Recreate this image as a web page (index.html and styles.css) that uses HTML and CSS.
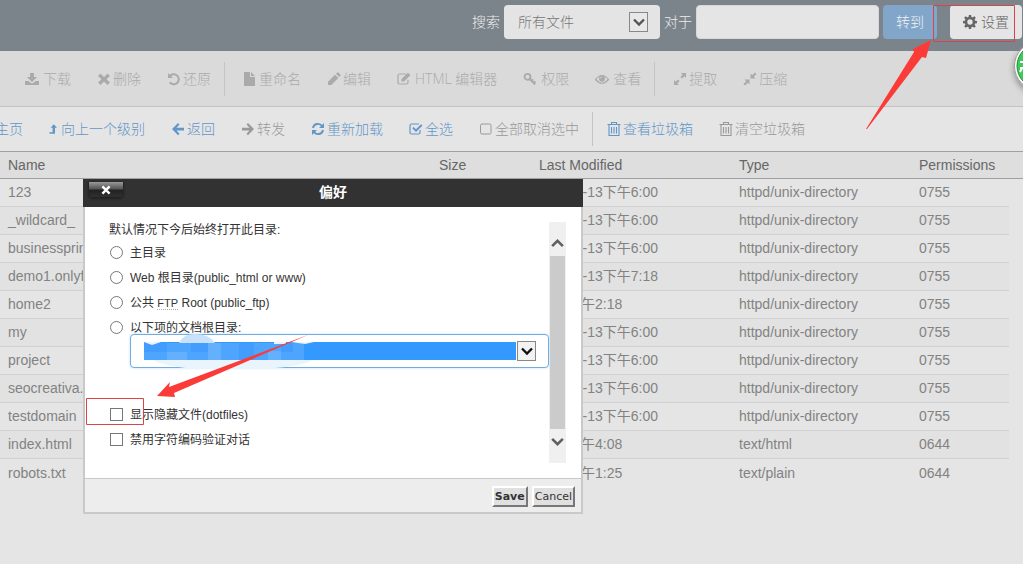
FILE: index.html
```html
<!DOCTYPE html>
<html lang="zh-CN">
<head>
<meta charset="utf-8">
<title>文件管理器</title>
<link rel="stylesheet" href="styles.css">
</head>
<body>
<svg class="symbols" aria-hidden="true">
  <symbol id="download" viewBox="0 0 14 14"><path d="M5 1h4v4h3L7 10 2 5h3zM0 9h3.500L6 11.300h2L10.500 9H14v4H0z"/></symbol>
  <symbol id="times" viewBox="0 0 14 14"><path d="M3.500 1.500 7 5l3.500-3.500L13 4 9.500 7.200 13 10.500 10.500 13 7 9.500 3.500 13 1 10.500 4.500 7.200 1 4z"/></symbol>
  <symbol id="undo" viewBox="0 0 14 14"><path d="M1 1v5h5L4.200 4.200A4 4 0 1 1 3.500 9.600L2 11A6 6 0 1 0 2.800 2.800z"/></symbol>
  <symbol id="file" viewBox="0 0 14 14"><path d="M1 0h6v5h5v9H1zM8 0l4 4H8z"/></symbol>
  <symbol id="pencil" viewBox="0 0 14 14"><path d="M1 13v-3.300L8 2.700 11.300 6l-7 7zM9 1.800l1.300-1.300h1L13.500 2.700v1L12.200 5z"/></symbol>
  <symbol id="edit" viewBox="0 0 14 14"><path d="M9 2H2.500Q1 2 1 3.500v7Q1 12 2.500 12h7Q11 12 11 10.500V8" fill="none" stroke="currentColor" stroke-width="1.200"/><path d="M4.500 9.500V7L11 .800 13.400 3.200 7 9.500z"/></symbol>
  <symbol id="key" viewBox="0 0 14 14"><g fill="none" stroke="currentColor" stroke-width="1.800"><circle cx="4.500" cy="4.800" r="3"/><path d="m6.700 7 5.500 5.500M8.500 9l1.600-1.600M10.700 11.200l1.800-1.800"/></g></symbol>
  <symbol id="eye" viewBox="0 0 14 14"><path d="M.5 7.500Q7-.5 13.500 7.500 7 15 .5 7.500z" fill="none" stroke="currentColor" stroke-width="1.200"/><circle cx="7" cy="6.800" r="3"/><path d="M5.300 6.500Q5.500 5 7 5" fill="none" stroke="#dadada" stroke-width=".8"/></symbol>
  <symbol id="expand" viewBox="0 0 14 14"><path d="M8 1h5v5l-1.700-1.700L9 6.600 7.400 5l2.300-2.300zM6 13H1V8l1.700 1.700L5 7.400 6.600 9l-2.300 2.300z"/></symbol>
  <symbol id="compress" viewBox="0 0 14 14"><path d="M7.500 6.500v-5l1.700 1.700L12 .500 13.500 2l-2.700 2.800 1.700 1.700zM6.500 7.500v5l-1.700-1.700L2 13.500.5 12l2.700-2.800-1.700-1.700z"/></symbol>
  <symbol id="home" viewBox="0 0 14 14"><path d="m7 1 7 6-1 1-6-5-6 5-1-1zM2 8l5-4 5 4v5H8V9H6v4H2z"/></symbol>
  <symbol id="up" viewBox="0 0 10 14"><path d="M6 1l4 4.500H7.500V13H1L0 11h4.500V5.500H2z"/></symbol>
  <symbol id="left" viewBox="0 0 14 14"><path d="M7 1l1.500 1.500L5.500 5.800H13v2.600H5.500l3 3.300L7 13.200 1 7z"/></symbol>
  <symbol id="right" viewBox="0 0 14 14"><path d="M7 1 5.500 2.500l3 3.300H1v2.600h7.500l-3 3.300L7 13.200 13 7z"/></symbol>
  <symbol id="refresh" viewBox="0 0 14 14"><path d="M2 6A5 5 0 0 1 11 4M12 8A5 5 0 0 1 3 10" fill="none" stroke="currentColor" stroke-width="1.900"/><path d="M13 1v5H8zM1 13V8h5z"/></symbol>
  <symbol id="checked" viewBox="0 0 14 14"><path d="M10 2H2.500Q1 2 1 3.500v7Q1 12 2.500 12h7Q11 12 11 10.500V8" fill="none" stroke="currentColor" stroke-width="1.200"/><path d="m3.200 6.300 1.300-1.300L7 7.300 12 2.200l1.500 1.400L7 10z"/></symbol>
  <symbol id="square" viewBox="0 0 14 14"><rect x="1.500" y="2" width="10.500" height="10" rx="1.500" fill="none" stroke="currentColor"/></symbol>
  <symbol id="trash" viewBox="0 0 14 14"><path d="M.5 2.500h13M4.500 2.500v-2h5v2M2 2.500v11h10v-11M4.500 5v6.500M7 5v6.500M9.500 5v6.500" fill="none" stroke="currentColor" stroke-width="1.100"/></symbol>
  <symbol id="gear" viewBox="0 0 14 14"><path fill-rule="evenodd" d="M5.900 0h2.200l.4 2 1.100.5L11.300 1.300l1.500 1.500-1.200 1.700.5 1.200 1.900.3v2.200l-1.900.3-.5 1.200 1.200 1.600-1.500 1.500-1.700-1.100-1.100.4L8.100 14H5.900l-.4-1.900-1.100-.4-1.700 1.100-1.500-1.500 1.200-1.600-.5-1.200L0 8.200V6l1.900-.3.5-1.200-1.200-1.700 1.500-1.500 1.700 1.200L5.500 2zM7 4.300a2.700 2.700 0 1 0 0 5.400 2.700 2.700 0 0 0 0-5.400z"/></symbol>
  <symbol id="chevron" viewBox="0 0 14 14"><path d="m2 4.500 5 5 5-5" fill="none" stroke="currentColor" stroke-width="2.400"/></symbol>
</svg>

<form class="searchbar">
  <label for="scope">搜索</label>
  <span class="scope"><select id="scope"><option>所有文件</option></select><span class="drop"><svg><use href="#chevron"/></svg></span></span>
  <label for="query">对于</label>
  <input class="query" id="query" type="text">
  <button class="go" type="button">转到</button>
  <button class="settings" type="button"><svg class="icon"><use href="#gear"/></svg>设置</button>
</form>

<nav class="toolbar actions">
  <button type="button"><svg class="icon"><use href="#download"/></svg>下载</button>
  <button type="button"><svg class="icon narrow"><use href="#times"/></svg>删除</button>
  <button type="button"><svg class="icon narrow"><use href="#undo"/></svg>还原</button>
  <span class="separator"></span>
  <button type="button"><svg class="icon narrow"><use href="#file"/></svg>重命名</button>
  <button type="button"><svg class="icon narrow"><use href="#pencil"/></svg>编辑</button>
  <button type="button"><svg class="icon"><use href="#edit"/></svg>HTML 编辑器</button>
  <button type="button"><svg class="icon"><use href="#key"/></svg>权限</button>
  <button type="button"><svg class="icon"><use href="#eye"/></svg>查看</button>
  <span class="separator"></span>
  <button type="button"><svg class="icon narrow"><use href="#expand"/></svg>提取</button>
  <button type="button"><svg class="icon narrow"><use href="#compress"/></svg>压缩</button>
</nav>

<nav class="toolbar navigation">
  <a href="#"><svg class="icon"><use href="#home"/></svg>主页</a>
  <a href="#"><svg class="icon slim"><use href="#up"/></svg>向上一个级别</a>
  <a href="#"><svg class="icon narrow"><use href="#left"/></svg>返回</a>
  <a href="#" class="muted"><svg class="icon narrow"><use href="#right"/></svg>转发</a>
  <a href="#"><svg class="icon narrow"><use href="#refresh"/></svg>重新加载</a>
  <a href="#"><svg class="icon narrow"><use href="#checked"/></svg>全选</a>
  <a href="#" class="muted"><svg class="icon narrow"><use href="#square"/></svg>全部取消选中</a>
  <span class="separator"></span>
  <a href="#"><svg class="icon narrow"><use href="#trash"/></svg>查看垃圾箱</a>
  <a href="#" class="muted"><svg class="icon narrow"><use href="#trash"/></svg>清空垃圾箱</a>
</nav>

<main class="listing">
  <table class="files">
    <colgroup><col><col class="size"><col class="modified"><col class="type"><col class="perm"><col class="gutter"></colgroup>
    <thead><tr><th>Name</th><th>Size</th><th>Last Modified</th><th>Type</th><th>Permissions</th><th></th></tr></thead>
    <tbody>
      <tr><td>123</td><td></td><td>2015-1-13下午6:00</td><td>httpd/unix-directory</td><td>0755</td><td></td></tr>
      <tr><td>_wildcard_</td><td></td><td>2015-1-13下午6:00</td><td>httpd/unix-directory</td><td>0755</td><td></td></tr>
      <tr><td>businessprin</td><td></td><td>2015-1-13下午6:00</td><td>httpd/unix-directory</td><td>0755</td><td></td></tr>
      <tr><td>demo1.onlyf</td><td></td><td>2015-1-13下午7:18</td><td>httpd/unix-directory</td><td>0755</td><td></td></tr>
      <tr><td>home2</td><td></td><td>今天下午2:18</td><td>httpd/unix-directory</td><td>0755</td><td></td></tr>
      <tr><td>my</td><td></td><td>2015-1-13下午6:00</td><td>httpd/unix-directory</td><td>0755</td><td></td></tr>
      <tr><td>project</td><td></td><td>2015-1-13下午6:00</td><td>httpd/unix-directory</td><td>0755</td><td></td></tr>
      <tr><td>seocreativa.</td><td></td><td>2015-1-13下午6:00</td><td>httpd/unix-directory</td><td>0755</td><td></td></tr>
      <tr><td>testdomain</td><td></td><td>2015-1-13下午6:00</td><td>httpd/unix-directory</td><td>0755</td><td></td></tr>
      <tr><td>index.html</td><td></td><td>今天下午4:08</td><td>text/html</td><td>0644</td><td></td></tr>
      <tr><td>robots.txt</td><td></td><td>今天下午1:25</td><td>text/plain</td><td>0644</td><td></td></tr>
    </tbody>
  </table>
</main>

<section class="dialog" role="dialog" aria-labelledby="dialog-title">
  <header class="dialog-head">
    <button class="close" type="button" aria-label="关闭"><svg viewBox="0 0 10 10"><path d="m2 2 6 6M8 2 2 8"/></svg></button>
    <h2 id="dialog-title">偏好</h2>
  </header>
  <div class="dialog-body">
    <form class="preferences">
      <p>默认情况下今后始终打开此目录:</p>
      <label><input type="radio" name="dir">主目录</label>
      <label><input type="radio" name="dir">Web 根目录(public_html or www)</label>
      <label><input type="radio" name="dir"><span>公共 <abbr>FTP</abbr> Root (public_ftp)</span></label>
      <label><input type="radio" name="dir" id="docroot">以下项的文档根目录:</label>
      <div class="domain">
        <select aria-label="文档根目录"><option></option></select>
        <span class="drop"><svg><use href="#chevron"/></svg></span>
        <svg class="mosaic" viewBox="0 0 230 40">
          <path fill="#c9e2fb" d="M48 9q4-9 16-9 14 0 20 9z"/>
          <path fill="#eaf4fd" d="M22 26h160q-16 8-57 9H68q-34-2-46-9z"/>
          <path fill="#4ea5fd" d="M13 9h160v17H13z"/>
          <path fill="#439dff" d="M13 9h23v9H13zM60 9h17v9H60zM108 9h15v17h-15zM150 9h12v9h-12z"/>
          <path fill="#64b0fc" d="M77 9h13v17H77zM137 17h13v9h-13zM36 18h20v8H36z"/>
          <path fill="#eaf4fd" d="M13 8h17l-9 3zM143 8h12v2h-12zM160 8h23l-9 2z"/>
        </svg>
      </div>
      <label class="dotfiles"><input type="checkbox">显示隐藏文件(dotfiles)</label>
      <label><input type="checkbox">禁用字符编码验证对话</label>
    </form>
    <div class="scrollbar" aria-hidden="true">
      <svg class="flip"><use href="#chevron"/></svg>
      <span class="thumb"></span>
      <svg><use href="#chevron"/></svg>
    </div>
  </div>
  <footer class="dialog-foot">
    <button class="save" type="button">Save</button>
    <button type="button">Cancel</button>
  </footer>
</section>

<svg class="notes" width="1023" height="564" aria-hidden="true">
  <g fill="none" stroke="#d9444a"><path d="M933.500 5.500h81v36h-81zM86.500 398.500h57v26h-57z"/></g>
  <g fill="#fb3b38"><path d="M866 129 914 52l-1-3 18-9-5 18-4-1-55 72zM309 334.500 169 387l1-5-13 14 18 1-1-4z"/></g>
</svg>
<div class="badge"><svg viewBox="0 0 50 50"><circle cx="25" cy="25" r="24.500" fill="#fff" stroke="#999"/><circle cx="25" cy="25" r="22" fill="#3fc95a" stroke="#278a3a"/><path d="M6 21h6M6 27h6M8 27l-2 4" fill="none" stroke="#fff" stroke-width="2"/></svg></div>
</body>
</html>
```
FILE: styles.css
```css
* { box-sizing: border-box; }

body {
  margin: 0;
  min-height: 100vh;
  position: relative;
  overflow: hidden;
  background: #e5e5e5;
  color: #828282;
  font: 14px/20px "Liberation Sans", "Noto Sans CJK SC", sans-serif;
}

button, input, select { font: inherit; color: inherit; margin: 0; }
svg { display: block; fill: currentColor; }
.symbols { position: absolute; width: 0; height: 0; }
.icon { width: 14px; height: 14px; flex: none; }
.icon.narrow { margin-right: -2px; }
.icon.slim { width: 8px; }

/* search */
.searchbar {
  display: flex;
  justify-content: flex-end;
  align-items: center;
  gap: 4px;
  padding: 5px 1px 12px;
  background: #7b848b;
  color: #eee;
  font-family: "Open Sans", "Noto Sans CJK SC", sans-serif;
  font-weight: 300;
}
.scope {
  display: flex;
  align-items: center;
  width: 156px;
  height: 34px;
  padding: 0 12px;
  border-radius: 4px;
  background: #e4e4e4;
  color: #777;
}
.scope select {
  flex: 1;
  min-width: 0;
  padding: 0 2px;
  border: 0;
  background: none;
  appearance: none;
}
.drop {
  display: grid;
  place-items: center;
  width: 19px;
  height: 20px;
  flex: none;
  border: 1px solid #888;
  background: #e8e8e8;
  color: #555;
}
.drop svg { width: 14px; height: 14px; }
.query {
  width: 183px;
  height: 34px;
  border: 1px solid #d8d8d8;
  border-radius: 4px;
  background: #e5e5e5;
}
.go, .settings {
  height: 34px;
  padding: 0 13px;
  border: 0;
  border-radius: 4px;
}
.go { background: #82a6ca; color: #f2f2f2; }
.settings {
  display: flex;
  align-items: center;
  gap: 4px;
  margin-left: 9px;
  background: #e5e5e5;
  color: #666;
}

/* toolbars */
.toolbar {
  display: flex;
  align-items: center;
  white-space: nowrap;
  font-family: "Open Sans", "Noto Sans CJK SC", sans-serif;
  font-weight: 300;
}
.toolbar button, .toolbar a {
  display: flex;
  align-items: center;
  gap: 4px;
  padding: 0 13px;
  border: 0;
  background: none;
  text-decoration: none;
}
.actions {
  height: 56px;
  padding-left: 12px;
  border-bottom: 1px solid #c3c3c3;
  background: #dadada;
  color: #aaa;
}
.navigation { height: 44px; color: #6296c8; }
.navigation a:first-child { margin-left: -36px; }
.navigation a { color: inherit; }
.navigation .muted { color: #999; }
.separator { width: 1px; height: 34px; margin-right: 5px; background: #c4c4c4; }
.navigation .separator { margin-right: 1px; }

/* file list */
.files { width: 100%; border-collapse: separate; border-spacing: 0; table-layout: fixed; }
.files .size { width: 100px; }
.files .modified { width: 200px; }
.files .type { width: 180px; }
.files .perm { width: 98px; }
.files .gutter { width: 14px; }
.files th, .files td {
  height: 28px;
  padding: 0 0 1px 8px;
  text-align: left;
  font-weight: 400;
  white-space: nowrap;
}
.files th {
  border: solid #a0a0a0;
  border-width: 1px 0;
  background: #dedede;
  color: #666;
}
.files td { border-bottom: 1px solid #d0d0d0; }
.files td:last-child, .files tbody tr:last-child td { border-bottom: 0; }
.files tbody tr:nth-child(even) td:not(:last-child) { background: #e2e2e2; }

/* dialog */
.dialog {
  position: absolute;
  left: 83px;
  top: 179px;
  width: 500px;
  background: #fff;
  color: #333;
  font-size: 12px;
}
.dialog-head {
  display: grid;
  grid-template-columns: 34px 1fr 34px;
  align-items: start;
  height: 28px;
  padding: 3px 6px 0;
  background: #323232;
  color: #fff;
}
.dialog-head h2 { margin: 0; font-size: 14px; line-height: 20px; text-align: center; }
.close {
  display: grid;
  place-items: center;
  height: 15px;
  padding: 0;
  border: 0;
  border-radius: 0 0 4px 4px;
  background: linear-gradient(#999, #555 45%, #222 55%, #303030);
  box-shadow: 0 1px 2px 1px #222;
}
.close svg { width: 12px; height: 12px; stroke: #fff; stroke-width: 2; }
.dialog-body {
  display: flex;
  justify-content: space-between;
  height: 271px;
  padding: 15px 15px 15px 24px;
  border: solid #c9c9c9;
  border-width: 0 2px;
}
.preferences { flex: 1; min-width: 0; padding-top: 1px; }
.preferences p { margin: 0; height: 17px; line-height: 14px; }
.preferences label { display: flex; align-items: center; gap: 7px; height: 25px; }
.preferences label input { width: 13px; height: 13px; margin-left: 1px; flex: none; }
.preferences input {
  appearance: none;
  border: 1px solid #777;
  background: #fff;
}
.preferences input[type="radio"] { border-radius: 50%; }
.preferences input:checked { background: #777; }
.preferences abbr { border-bottom: 1px dotted #aaa; font-size: 11px; text-decoration: none; }
.domain {
  position: relative;
  display: flex;
  align-items: center;
  gap: 1px;
  height: 34px;
  margin: -6px 0 0 21px;
  padding: 0 12px 0 13px;
  border: 1px solid #72addf;
  border-radius: 4px;
  background: #fff;
  box-shadow: 0 0 3px #c5dff5;
}
.domain select {
  flex: 1;
  height: 18px;
  border: 0;
  border-radius: 0;
  background: #3399ff;
  color: #fff;
  appearance: none;
}
.domain .drop { background: #f2f2f2; color: #111; }
.mosaic { position: absolute; left: 0; top: -1px; width: 230px; height: 40px; pointer-events: none; }
.preferences .dotfiles { margin-top: 34px; }
.scrollbar {
  display: flex;
  flex-direction: column;
  align-items: center;
  gap: 5px;
  width: 17px;
  padding: 14px 1px;
  background: #f0f0f0;
  color: #606060;
}
.scrollbar svg { width: 15px; height: 15px; flex: none; }
.scrollbar .flip { transform: rotate(180deg); }
.thumb { flex: 1; align-self: stretch; background: #cbcbcb; }
.dialog-foot {
  display: flex;
  justify-content: flex-end;
  gap: 4px;
  height: 36px;
  padding: 7px 6px;
  border: 2px solid #c9c9c9;
  border-top-width: 1px;
  background: #ededed;
}
.dialog-foot button {
  height: 21px;
  padding: 0 1px;
  border: 2px solid;
  border-color: #fff #777 #777 #fff;
  background: #e0e0e0;
  font: 11px/17px "DejaVu Sans", sans-serif;
}
.dialog-foot .save { font-weight: 700; }

/* pointers and floating badge */
.notes { position: absolute; left: 0; top: 0; pointer-events: none; }
.badge {
  position: absolute;
  left: 1014px;
  top: 41px;
  width: 50px;
  height: 50px;
  border-radius: 50%;
  box-shadow: 0 3px 6px #888;
}
```
